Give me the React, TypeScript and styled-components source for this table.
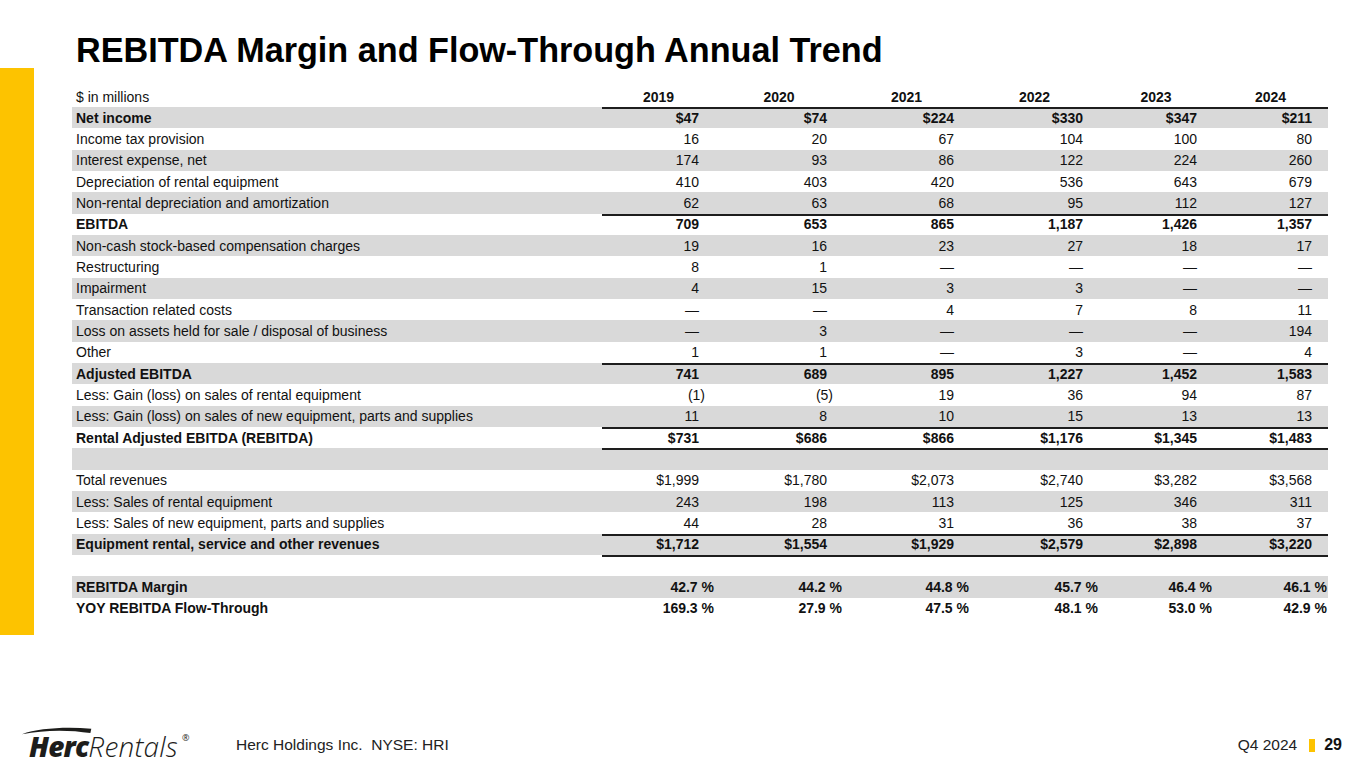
import styled, { createGlobalStyle } from "styled-components";

const GlobalStyle = createGlobalStyle`
  body {
    margin: 0;
    background: #ffffff;
    font-family: "Liberation Sans", Arial, sans-serif;
    color: #111111;
  }
`;

type Cell = string;
type RowData = {
  label: string;
  values: Cell[];
  bold?: boolean;
  rule?: boolean;
  percent?: boolean;
};

const years = ["2019", "2020", "2021", "2022", "2023", "2024"];

const rows: RowData[] = [
  { label: "Net income", values: ["$47", "$74", "$224", "$330", "$347", "$211"], bold: true, rule: true },
  { label: "Income tax provision", values: ["16", "20", "67", "104", "100", "80"] },
  { label: "Interest expense, net", values: ["174", "93", "86", "122", "224", "260"] },
  { label: "Depreciation of rental equipment", values: ["410", "403", "420", "536", "643", "679"] },
  { label: "Non-rental depreciation and amortization", values: ["62", "63", "68", "95", "112", "127"] },
  { label: "EBITDA", values: ["709", "653", "865", "1,187", "1,426", "1,357"], bold: true, rule: true },
  { label: "Non-cash stock-based compensation charges", values: ["19", "16", "23", "27", "18", "17"] },
  { label: "Restructuring", values: ["8", "1", "—", "—", "—", "—"] },
  { label: "Impairment", values: ["4", "15", "3", "3", "—", "—"] },
  { label: "Transaction related costs", values: ["—", "—", "4", "7", "8", "11"] },
  { label: "Loss on assets held for sale / disposal of business", values: ["—", "3", "—", "—", "—", "194"] },
  { label: "Other", values: ["1", "1", "—", "3", "—", "4"] },
  { label: "Adjusted EBITDA", values: ["741", "689", "895", "1,227", "1,452", "1,583"], bold: true, rule: true },
  { label: "Less: Gain (loss) on sales of rental equipment", values: ["(1)", "(5)", "19", "36", "94", "87"] },
  { label: "Less: Gain (loss) on sales of new equipment, parts and supplies", values: ["11", "8", "10", "15", "13", "13"] },
  { label: "Rental Adjusted EBITDA (REBITDA)", values: ["$731", "$686", "$866", "$1,176", "$1,345", "$1,483"], bold: true, rule: true },
  { label: "", values: ["", "", "", "", "", ""], rule: true },
  { label: "Total revenues", values: ["$1,999", "$1,780", "$2,073", "$2,740", "$3,282", "$3,568"] },
  { label: "Less: Sales of rental equipment", values: ["243", "198", "113", "125", "346", "311"] },
  { label: "Less: Sales of new equipment, parts and supplies", values: ["44", "28", "31", "36", "38", "37"] },
  { label: "Equipment rental, service and other revenues", values: ["$1,712", "$1,554", "$1,929", "$2,579", "$2,898", "$3,220"], bold: true, rule: true },
  { label: "", values: ["", "", "", "", "", ""], rule: true },
  { label: "REBITDA Margin", values: ["42.7 %", "44.2 %", "44.8 %", "45.7 %", "46.4 %", "46.1 %"], bold: true, percent: true },
  { label: "YOY REBITDA Flow-Through", values: ["169.3 %", "27.9 %", "47.5 %", "48.1 %", "53.0 %", "42.9 %"], bold: true, percent: true },
];

// accounting-style alignment: % and ) hang into the right padding
const cellPad = (v: string, percent?: boolean) => {
  if (percent) return 1;
  if (v.endsWith(")")) return 10;
  return 16;
};

export default function App() {
  return (
    <>
      <GlobalStyle />
      <Page>
        <Title>REBITDA Margin and Flow-Through Annual Trend</Title>
        <Body>
          <SideBar />
          <Table>
            <HeaderRow>
              <Label>$ in millions</Label>
              <Nums>
                {years.map((y) => (
                  <Year key={y}>{y}</Year>
                ))}
              </Nums>
            </HeaderRow>
            {rows.map((r, i) => (
              <Row key={i} $shaded={i % 2 === 0}>
                <Label $bold={r.bold}>{r.label}</Label>
                <Nums $rule={r.rule}>
                  {r.values.map((v, j) => (
                    <Num key={j} $bold={r.bold} $pad={cellPad(v, r.percent)}>
                      {v}
                    </Num>
                  ))}
                </Nums>
              </Row>
            ))}
          </Table>
        </Body>
        <Footer>
          <Logo>
            <Swoosh viewBox="0 0 80 10" aria-hidden>
              <path d="M0 8 C 18 1.5, 48 -0.5, 77 2 L 76 6.8 C 52 2.8, 24 3.2, 0 8 Z" fill="#1d1d1b" />
            </Swoosh>
            <LogoBold>Herc</LogoBold>
            <LogoLight>Rentals</LogoLight>
            <Registered>®</Registered>
          </Logo>
          <Company>Herc Holdings Inc.&nbsp;&nbsp;NYSE: HRI</Company>
          <PageInfo>
            <Quarter>Q4 2024</Quarter>
            <Tick />
            <PageNum>29</PageNum>
          </PageInfo>
        </Footer>
      </Page>
    </>
  );
}

const Page = styled.div`
  width: 1365px;
  height: 768px;
  display: flex;
  flex-direction: column;
  overflow: hidden;
`;

const Title = styled.h1`
  margin: 0 0 1px 0;
  padding: 33px 0 0 76px;
  font-size: 34.2px;
  line-height: 34px;
  font-weight: 700;
  color: #000000;
`;

const Body = styled.div`
  display: flex;
  align-items: flex-start;
`;

const SideBar = styled.div`
  width: 34px;
  height: 567px;
  background: #fdc300;
  flex-shrink: 0;
`;

const Table = styled.div`
  margin: 18px 0 0 38px;
  width: 1256px;
  display: flex;
  flex-direction: column;
  font-size: 14px;
`;

const HeaderRow = styled.div`
  display: flex;
  height: 21px;
  align-items: center;
`;

const Row = styled.div<{ $shaded?: boolean }>`
  display: flex;
  height: 21.33px;
  align-items: stretch;
  background: ${(p) => (p.$shaded ? "#d9d9d9" : "transparent")};
`;

const Label = styled.div<{ $bold?: boolean }>`
  width: 530px;
  flex-shrink: 0;
  padding-left: 4px;
  box-sizing: border-box;
  display: flex;
  align-items: center;
  font-weight: ${(p) => (p.$bold ? 700 : 400)};
  white-space: nowrap;
`;

const Nums = styled.div<{ $rule?: boolean }>`
  flex: 1;
  display: grid;
  grid-template-columns: 113px 128px 127px 129px 114px 115px;
  box-shadow: ${(p) => (p.$rule ? "inset 0 2px 0 #1e1e1e" : "none")};
  height: 100%;
`;

const Year = styled.div`
  text-align: center;
  font-weight: 700;
  align-self: center;
`;

const Num = styled.div<{ $bold?: boolean; $pad: number }>`
  display: flex;
  align-items: center;
  justify-content: flex-end;
  padding-right: ${(p) => p.$pad}px;
  font-weight: ${(p) => (p.$bold ? 700 : 400)};
  white-space: pre;
`;

const Footer = styled.div`
  margin-top: auto;
  height: 48px;
  display: flex;
  align-items: center;
  color: #222222;
`;

const Logo = styled.div`
  position: relative;
  width: 160px;
  margin-left: 29px;
  display: flex;
  align-items: baseline;
  font-family: "Open Sans", "Liberation Sans", sans-serif;
  font-style: italic;
  font-size: 28px;
  line-height: 30px;
  color: #1d1d1b;
  padding-top: 4px;
`;

const Swoosh = styled.svg`
  position: absolute;
  left: -8px;
  top: 0px;
  width: 74px;
  height: 9px;
`;

const LogoBold = styled.span`
  font-weight: 800;
  letter-spacing: -0.8px;
`;

const LogoLight = styled.span`
  font-weight: 300;
  letter-spacing: 0.2px;
`;

const Registered = styled.span`
  position: absolute;
  left: 153px;
  top: 6px;
  font-size: 9px;
  line-height: 1;
  font-style: normal;
`;

const Company = styled.div`
  margin-left: 47px;
  font-size: 15.5px;
  padding-top: 2px;
`;

const PageInfo = styled.div`
  margin-left: auto;
  margin-right: 23px;
  display: flex;
  align-items: center;
  padding-top: 2px;
`;

const Quarter = styled.span`
  font-size: 15.5px;
`;

const Tick = styled.span`
  width: 6px;
  height: 13px;
  background: #fdc300;
  margin: 0 9px 0 12px;
`;

const PageNum = styled.span`
  font-size: 16px;
  font-weight: 700;
  color: #111111;
`;
